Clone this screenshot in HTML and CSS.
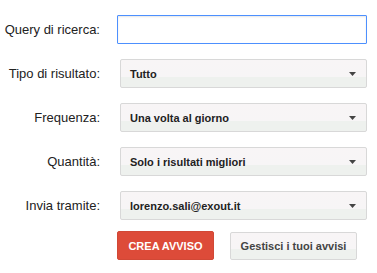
FILE: index.html
```html
<!DOCTYPE html>
<html lang="it">
<head>
    <meta charset="UTF-8">
    <meta name="viewport" content="width=device-width, initial-scale=1.0">
    <title>Crea avviso</title>
    <link rel="stylesheet" href="styles.css">
</head>
<body>

    <form class="alert-form">
        <div class="row">
            <label class="field-label" for="query">Query di ricerca:</label>
            <input type="text" id="query" class="query-input">
        </div>

        <div class="row">
            <span class="field-label">Tipo di risultato:</span>
            <div class="dropdown">
                <span>Tutto</span>
                <svg class="arrow" width="7" height="4" viewBox="0 0 7 4"><path d="M0 0h7L3.5 4z" fill="#444"/></svg>
            </div>
        </div>

        <div class="row">
            <span class="field-label">Frequenza:</span>
            <div class="dropdown">
                <span>Una volta al giorno</span>
                <svg class="arrow" width="7" height="4" viewBox="0 0 7 4"><path d="M0 0h7L3.5 4z" fill="#444"/></svg>
            </div>
        </div>

        <div class="row">
            <span class="field-label">Quantità:</span>
            <div class="dropdown">
                <span>Solo i risultati migliori</span>
                <svg class="arrow" width="7" height="4" viewBox="0 0 7 4"><path d="M0 0h7L3.5 4z" fill="#444"/></svg>
            </div>
        </div>

        <div class="row">
            <span class="field-label">Invia tramite:</span>
            <div class="dropdown">
                <span>lorenzo.sali@exout.it</span>
                <svg class="arrow" width="7" height="4" viewBox="0 0 7 4"><path d="M0 0h7L3.5 4z" fill="#444"/></svg>
            </div>
        </div>

        <div class="actions">
            <button type="button" class="btn btn-red">CREA AVVISO</button>
            <button type="button" class="btn btn-grey">Gestisci i tuoi avvisi</button>
        </div>
    </form>

</body>
</html>
```

FILE: styles.css
```css
body {
    font-family: Arial, "Liberation Sans", sans-serif;
    margin: 0;
    background: #fff;
    color: #222;
}

.alert-form {
    padding-top: 15px;
    width: 367px;
}

.row {
    display: flex;
    align-items: center;
    height: 29px;
    margin-bottom: 15px;
}

.field-label {
    width: 100px;
    margin-right: 17px;
    text-align: right;
    font-size: 13px;
    color: #222;
    flex-shrink: 0;
}

.query-input {
    box-sizing: border-box;
    width: 250px;
    height: 29px;
    margin: 0;
    padding: 0 8px;
    border: 1px solid #4d90fe;
    border-radius: 1px;
    box-shadow: inset 0 1px 2px rgba(0, 0, 0, 0.1);
    outline: none;
    font-size: 13px;
}

.dropdown {
    box-sizing: border-box;
    display: flex;
    align-items: center;
    justify-content: space-between;
    width: 247px;
    height: 29px;
    margin-left: 3px;
    padding: 0 10px 0 9px;
    border: 1px solid #d8d8d8;
    border-radius: 2px;
    background: linear-gradient(to bottom, #f8f5f6 0, #f7f5f6 62%, #eef1ee 62%, #eef1ee 100%);
    font-size: 11px;
    font-weight: bold;
    color: #222;
}

.arrow {
    display: block;
}

.actions {
    display: flex;
    align-items: flex-end;
    margin-top: -4px;
    padding-left: 117px;
}

.btn {
    box-sizing: border-box;
    height: 29px;
    margin: 0;
    border-radius: 2px;
    font-family: Arial, "Liberation Sans", sans-serif;
    font-size: 11px;
    font-weight: bold;
    cursor: pointer;
}

.btn-red {
    width: 97px;
    padding: 0;
    background-color: #dd4b39;
    border: 1px solid #d14836;
    color: #fff;
}

.btn-grey {
    width: 127px;
    height: 28px;
    margin-left: 16px;
    padding: 0;
    background: linear-gradient(to bottom, #f8f5f6 0, #f7f5f6 62%, #eef1ee 62%, #eef1ee 100%);
    border: 1px solid #d8d8d8;
    color: #444;
}
```
